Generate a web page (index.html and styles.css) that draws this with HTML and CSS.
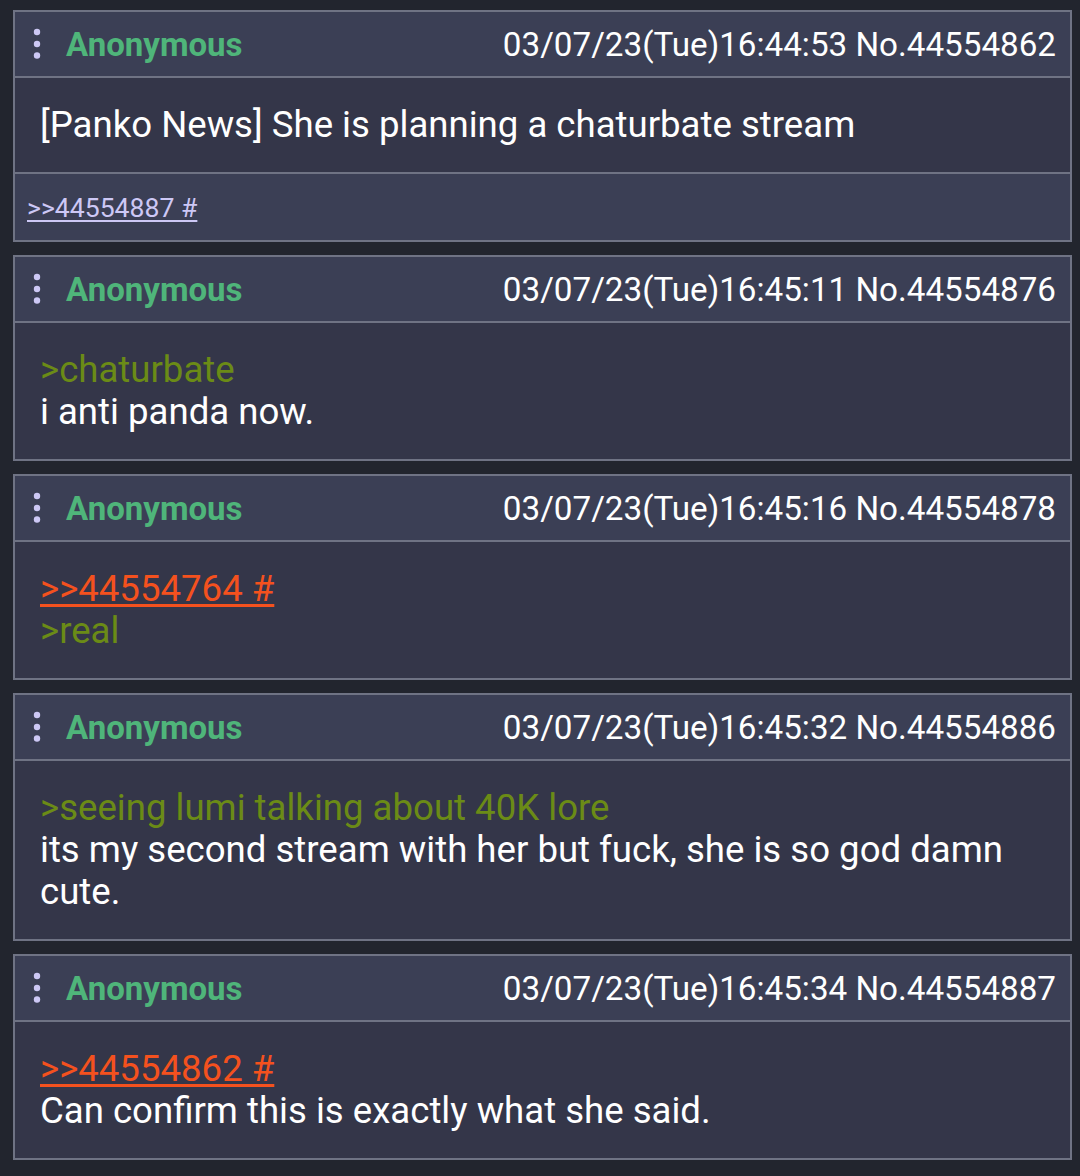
FILE: index.html
```html
<!DOCTYPE html>
<html>
<head>
<meta charset="utf-8">
<link rel="stylesheet" href="styles.css">
</head>
<body>
<div class="thread">
  <div class="post">
    <div class="post-head">
      <svg class="menu" width="8" height="32" viewBox="0 0 8 32"><circle cx="4" cy="4" r="3.2"/><circle cx="4" cy="16" r="3.2"/><circle cx="4" cy="27.5" r="3.2"/></svg>
      <span class="name">Anonymous</span>
      <span class="meta">03/07/23(Tue)16:44:53 No.44554862</span>
    </div>
    <div class="post-body">[Panko News] She is planning a chaturbate stream</div>
    <div class="post-foot"><a class="reply-link" href="#">&gt;&gt;44554887 #</a></div>
  </div>

  <div class="post">
    <div class="post-head">
      <svg class="menu" width="8" height="32" viewBox="0 0 8 32"><circle cx="4" cy="4" r="3.2"/><circle cx="4" cy="16" r="3.2"/><circle cx="4" cy="27.5" r="3.2"/></svg>
      <span class="name">Anonymous</span>
      <span class="meta">03/07/23(Tue)16:45:11 No.44554876</span>
    </div>
    <div class="post-body"><span class="quote">&gt;chaturbate</span><br>i anti panda now.</div>
  </div>

  <div class="post">
    <div class="post-head">
      <svg class="menu" width="8" height="32" viewBox="0 0 8 32"><circle cx="4" cy="4" r="3.2"/><circle cx="4" cy="16" r="3.2"/><circle cx="4" cy="27.5" r="3.2"/></svg>
      <span class="name">Anonymous</span>
      <span class="meta">03/07/23(Tue)16:45:16 No.44554878</span>
    </div>
    <div class="post-body"><a class="qlink" href="#">&gt;&gt;44554764 #</a><br><span class="quote">&gt;real</span></div>
  </div>

  <div class="post">
    <div class="post-head">
      <svg class="menu" width="8" height="32" viewBox="0 0 8 32"><circle cx="4" cy="4" r="3.2"/><circle cx="4" cy="16" r="3.2"/><circle cx="4" cy="27.5" r="3.2"/></svg>
      <span class="name">Anonymous</span>
      <span class="meta">03/07/23(Tue)16:45:32 No.44554886</span>
    </div>
    <div class="post-body"><span class="quote">&gt;seeing lumi talking about 40K lore</span><br>its my second stream with her but fuck, she is so god damn cute.</div>
  </div>

  <div class="post">
    <div class="post-head">
      <svg class="menu" width="8" height="32" viewBox="0 0 8 32"><circle cx="4" cy="4" r="3.2"/><circle cx="4" cy="16" r="3.2"/><circle cx="4" cy="27.5" r="3.2"/></svg>
      <span class="name">Anonymous</span>
      <span class="meta">03/07/23(Tue)16:45:34 No.44554887</span>
    </div>
    <div class="post-body"><a class="qlink" href="#">&gt;&gt;44554862 #</a><br>Can confirm this is exactly what she said.</div>
  </div>
</div>
</body>
</html>
```

FILE: styles.css
```css
html, body {
  margin: 0;
  padding: 0;
  background: #22252e;
}
body {
  font-family: Roboto, "Noto Sans", sans-serif;
  color: #ffffff;
}
.thread {
  display: flex;
  flex-direction: column;
  gap: 13px;
  padding: 10px 8px 10px 13px;
}
.post {
  border: 2px solid #6f7384;
  background: #343649;
}
.post-head {
  display: flex;
  align-items: center;
  height: 64px;
  background: #3b3f55;
  border-bottom: 2px solid #6f7384;
  padding: 0 14px 0 18px;
}
.menu {
  fill: #cdc8f5;
  flex: none;
}
.name {
  margin-left: 25px;
  font-weight: 700;
  font-size: 33px;
  color: #4fb57a;
}
.meta {
  margin-left: auto;
  font-size: 33.2px;
  color: #ffffff;
}
.post-body {
  padding: 26px 25px;
  font-size: 36.6px;
  line-height: 42px;
}
.quote {
  color: #6b8b16;
}
.qlink {
  color: #f4511e;
  text-decoration: underline;
  text-underline-offset: 3px;
}
.post-foot {
  display: flex;
  align-items: center;
  height: 66px;
  background: #3b3f55;
  border-top: 2px solid #6f7384;
  padding: 0 12px;
}
.reply-link {
  color: #cdc8f5;
  font-size: 26.6px;
  text-decoration: underline;
  text-underline-offset: 3px;
}
```
